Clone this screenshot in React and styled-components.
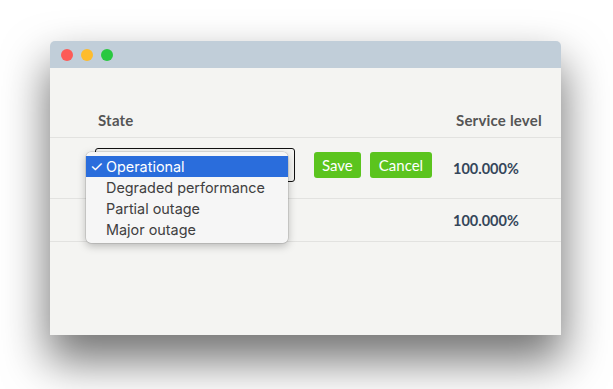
import React from "react";
import styled, { createGlobalStyle } from "styled-components";

const Global = createGlobalStyle`
  html, body { margin: 0; padding: 0; background: #ffffff; }
  body { font-family: Lato, "Open Sans", sans-serif; }
`;

const Page = styled.div`
  width: 613px;
  height: 389px;
  padding: 41px 52px 0 50px;
  box-sizing: border-box;
  overflow: hidden;
`;

const Window = styled.div`
  width: 511px;
  height: 294px;
  display: flex;
  flex-direction: column;
  background: #f4f4f2;
  border-radius: 5px 5px 0 0;
  box-shadow: 0 24px 45px 2px rgba(0, 0, 0, 0.55);
`;

const TitleBar = styled.div`
  height: 27px;
  flex: none;
  display: flex;
  align-items: center;
  gap: 8px;
  padding-left: 11px;
  background: #c1ced9;
  border-radius: 5px 5px 0 0;
`;

const Dot = styled.span`
  width: 12px;
  height: 12px;
  border-radius: 50%;
  background: ${(p) => p.$c};
`;

const Table = styled.div`
  display: flex;
  flex-direction: column;
`;

const Row = styled.div`
  display: grid;
  grid-template-columns: 358px 1fr;
  padding-left: 45px;
  height: ${(p) => p.$h}px;
  align-items: ${(p) => (p.$head ? "end" : "center")};
  border-bottom: 1px solid #e2e2e0;
  box-sizing: border-box;
`;

const HeadCell = styled.div`
  font-size: 15px;
  font-weight: 700;
  color: #555555;
  line-height: 18px;
  letter-spacing: 0.2px;
  padding-bottom: 8px;
  padding-left: ${(p) => p.$pl || 0}px;
`;

const Level = styled.div`
  font-size: 14.5px;
  font-weight: 700;
  color: #34465a;
  padding-top: ${(p) => p.$pt || 0}px;
`;

const Editor = styled.div`
  display: flex;
  align-items: center;
  margin-bottom: 6px;
`;

const SelectWrap = styled.div`
  position: relative;
  width: 200px;
  height: 34px;
  box-sizing: border-box;
  border: 1px solid #111111;
  border-radius: 3px;
  margin-right: 19px;
`;

const Menu = styled.ul`
  position: absolute;
  left: -10px;
  top: 3px;
  width: 202px;
  margin: 0;
  padding: 4px 0 3px;
  list-style: none;
  box-sizing: border-box;
  background: #f6f6f6;
  border-radius: 5px;
  box-shadow: 0 0 0 0.5px rgba(0, 0, 0, 0.18), 0 3px 8px rgba(0, 0, 0, 0.25);
  font-family: Inter, "Open Sans", sans-serif;
  font-size: 14.4px;
  color: #404040;
  z-index: 2;
`;

const Item = styled.li`
  position: relative;
  height: 21px;
  line-height: 21px;
  padding-left: 20px;
  background: ${(p) => (p.$active ? "#2a6ddc" : "transparent")};
  color: ${(p) => (p.$active ? "#ffffff" : "#404040")};
`;

const Check = styled.span`
  position: absolute;
  left: 4px;
  top: 0;
  font-size: 15px;
`;

const Button = styled.button`
  height: 26px;
  padding: 0 ${(p) => p.$px}px;
  margin-right: 9px;
  border: none;
  border-radius: 3px;
  background: #5bc41e;
  color: #ffffff;
  font-family: Lato, "Open Sans", sans-serif;
  font-size: 15px;
  cursor: pointer;
`;

export default function App() {
  return (
    <>
      <Global />
      <Page>
        <Window>
          <TitleBar>
            <Dot $c="#fd5b57" />
            <Dot $c="#febc2d" />
            <Dot $c="#29c840" />
          </TitleBar>
          <Table>
            <Row $head $h={70}>
              <HeadCell $pl={3}>State</HeadCell>
              <HeadCell $pl={3}>Service level</HeadCell>
            </Row>
            <Row $h={61}>
              <Editor>
                <SelectWrap>
                  <Menu>
                    <Item $active>
                      <Check>✓</Check>Operational
                    </Item>
                    <Item>Degraded performance</Item>
                    <Item>Partial outage</Item>
                    <Item>Major outage</Item>
                  </Menu>
                </SelectWrap>
                <Button $px={8}>Save</Button>
                <Button $px={9}>Cancel</Button>
              </Editor>
              <Level>100.000%</Level>
            </Row>
            <Row $h={43}>
              <div />
              <Level>100.000%</Level>
            </Row>
          </Table>
        </Window>
      </Page>
    </>
  );
}
